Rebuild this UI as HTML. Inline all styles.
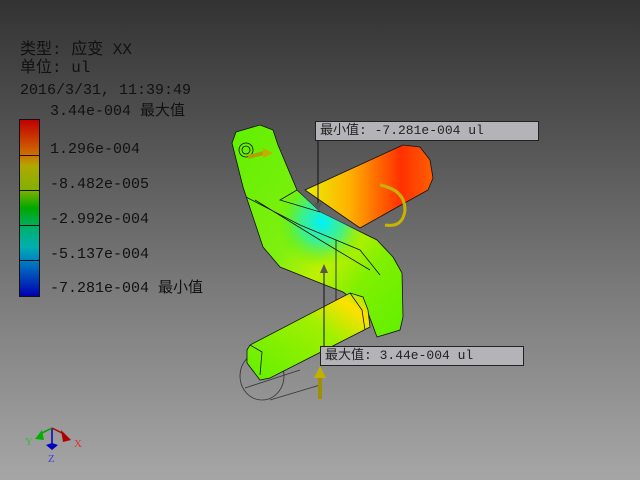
<!DOCTYPE html>
<html><head><meta charset="utf-8"><style>
html,body{margin:0;padding:0}
body{width:640px;height:480px;overflow:hidden;position:relative;background:linear-gradient(#333 0%,#555 30%,#7a7a7a 60%,#a6a6a6 100%);font-family:"Liberation Mono","Noto Sans CJK SC",monospace;color:#111}
.t{position:absolute;font-size:15px;line-height:16px;white-space:pre}
.bar{position:absolute;left:19px;top:119px;width:19px;height:176px;border:1px solid #111;background:linear-gradient(#c00000,#d07000 20%,#b0a800 26%,#80b000 40%,#00a800 50%,#00b070 62%,#00b0b0 72%,#0080c0 80%,#0000b0 100%)}
.seg{position:absolute;left:19px;width:21px;height:1px;background:#111}
.box{position:absolute;background:#b4b4b8;border:1px solid #222;font-size:13px;line-height:18px;padding-left:4px;color:#222}
</style></head><body>
<div class="t" style="left:20px;top:42px;font-size:16px">类型: 应变 XX</div>
<div class="t" style="left:20px;top:60px;font-size:16px">单位: ul</div>
<div class="t" style="left:20px;top:83px">2016/3/31, 11:39:49</div>
<div class="t" style="left:50px;top:104px">3.44e-004 最大值</div>
<div class="bar"></div>
<div class="seg" style="top:155px"></div><div class="seg" style="top:190px"></div><div class="seg" style="top:225px"></div><div class="seg" style="top:260px"></div>
<div class="t" style="left:50px;top:142px">1.296e-004</div>
<div class="t" style="left:50px;top:177px">-8.482e-005</div>
<div class="t" style="left:50px;top:212px">-2.992e-004</div>
<div class="t" style="left:50px;top:247px">-5.137e-004</div>
<div class="t" style="left:50px;top:281px">-7.281e-004 最小值</div>
<svg style="position:absolute;left:0;top:0" width="640" height="480">
<defs>
<linearGradient id="sh" x1="0" y1="0" x2="1" y2="0"><stop offset="0" stop-color="#e8f000"/><stop offset=".35" stop-color="#ffb000"/><stop offset=".75" stop-color="#ff3000"/><stop offset="1" stop-color="#ff6000"/></linearGradient>
<linearGradient id="arm" x1="0" y1="0" x2="1" y2="1"><stop offset="0" stop-color="#60f000"/><stop offset=".45" stop-color="#80f010"/><stop offset=".6" stop-color="#c0f000"/><stop offset=".75" stop-color="#80f000"/><stop offset="1" stop-color="#60f000"/></linearGradient>
<radialGradient id="cy" cx="322" cy="222" r="45" gradientUnits="userSpaceOnUse"><stop offset="0" stop-color="#00f0ff"/><stop offset=".5" stop-color="#30f0a0" stop-opacity=".8"/><stop offset="1" stop-color="#60f000" stop-opacity="0"/></radialGradient>
<linearGradient id="low" x1="0" y1="1" x2="1" y2="0"><stop offset="0" stop-color="#60f000"/><stop offset=".6" stop-color="#a0f000"/><stop offset=".85" stop-color="#ffe000"/><stop offset="1" stop-color="#80f000"/></linearGradient>
</defs>
<g stroke="#111" stroke-width="0.8">
<ellipse cx="262" cy="376" rx="22" ry="24" fill="none" stroke="#333"/>
<path d="M245 388 L300 370 M270 400 L320 385" stroke="#333" fill="none"/>
<path d="M305 190 L403 145 L420 147 L430 160 L433 178 L428 190 L360 228 Z" fill="url(#sh)"/>
<path d="M232 143 L236 132 L260 125 L273 130 L278 145 L297 190 L320 212 L377 240 L393 257 L402 273 L403 317 L400 330 L377 337 L367 310 L343 292 L320 283 L280 267 L263 247 L243 187 Z" fill="url(#arm)"/>
<path d="M232 143 L236 132 L260 125 L273 130 L278 145 L297 190 L320 212 L377 240 L393 257 L402 273 L403 317 L400 330 L377 337 L367 310 L343 292 L320 283 L280 267 L263 247 L243 187 Z" fill="url(#cy)" stroke="none"/>
<path d="M247 350 L250 345 L350 293 L363 297 L368 310 L370 327 L270 378 L260 380 L247 363 Z" fill="url(#low)"/>
<path d="M246 197 L300 225 L360 250 L380 275 M255 200 L320 240 L370 270 M297 190 L280 200 L320 212 M336 240 L336 300 M250 345 L262 352 L260 375 M350 293 L362 310 L365 330" fill="none"/>
<circle cx="246" cy="150" r="7" fill="none"/><circle cx="246" cy="150" r="4" fill="none"/>
</g>
<path d="M248 157 L268 152" stroke="#b0a000" stroke-width="4" fill="none"/>
<path d="M263 148 L273 153 L263 158 Z" fill="#c0b000"/>
<path d="M380 185 Q405 190 405 210 Q403 228 385 225" stroke="#c8b400" stroke-width="3" fill="none"/>
<line x1="320" y1="399" x2="320" y2="372" stroke="#a09000" stroke-width="4"/>
<path d="M314 378 L320 366 L326 378 Z" fill="#c0b000"/>
<line x1="318" y1="141" x2="318" y2="210" stroke="#111"/>
<path d="M314 203 L318 211 L322 203 Z" fill="#555"/>
<line x1="324" y1="346" x2="324" y2="268" stroke="#111"/>
<path d="M320 273 L324 264 L328 273 Z" fill="#555"/>
<g stroke-width="1.5">
<line x1="52" y1="428" x2="52" y2="448" stroke="#0000c0"/>
<line x1="52" y1="428" x2="40" y2="434" stroke="#00a000"/>
<line x1="52" y1="428" x2="64" y2="434" stroke="#b00000"/>
</g>
<path d="M35 439 L42 430 L44 440 Z" fill="#00b000"/>
<path d="M61 430 L71 440 L63 442 Z" fill="#b00000"/>
<path d="M46 445 L52 450 L58 445 L52 443 Z" fill="#0000c0"/>
<text x="25" y="445" font-family="Liberation Serif" font-size="11" fill="#30c030">Y</text>
<text x="74" y="447" font-family="Liberation Serif" font-size="11" fill="#e03030">X</text>
<text x="48" y="462" font-family="Liberation Serif" font-size="11" fill="#4040e0">Z</text>
</svg>
<div class="box" style="left:315px;top:121px;width:218px;height:18px">最小值: -7.281e-004 ul</div>
<div class="box" style="left:320px;top:346px;width:198px;height:18px">最大值: 3.44e-004 ul</div>
</body></html>
